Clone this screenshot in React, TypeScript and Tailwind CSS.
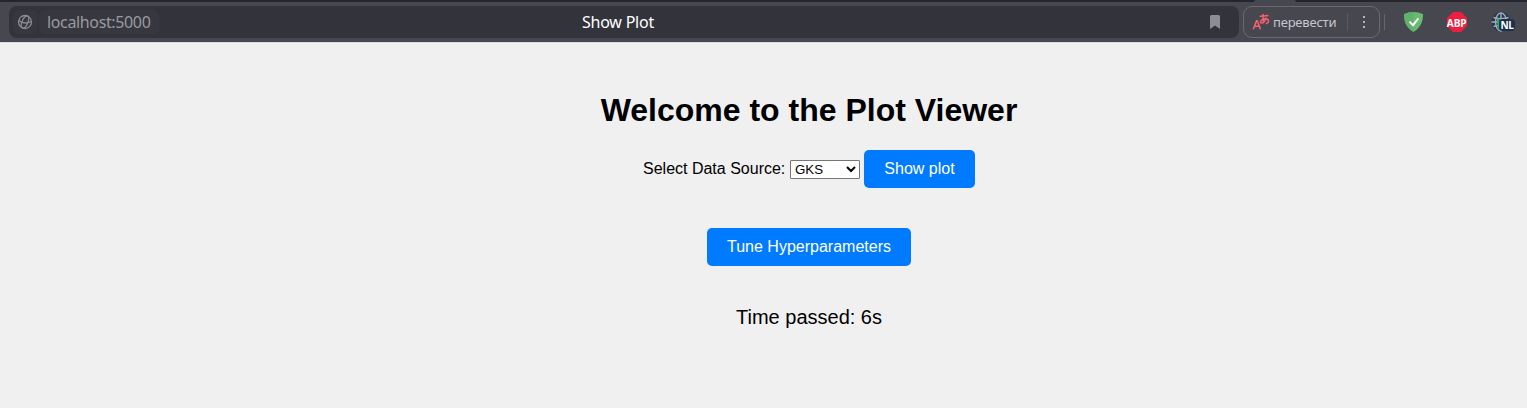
import React from "react";

function SiteIcon() {
  return (
    <svg className="h-4 w-4" viewBox="0 0 16 16" fill="none" stroke="#8a8a93" strokeWidth="1.3">
      <circle cx="8" cy="8" r="6.500" />
      <g transform="rotate(22 8 8)">
        <ellipse cx="8" cy="8" rx="2.900" ry="6.500" />
      </g>
      <path d="M1.800 6.200C5 9.500 10 9.500 14.300 7.500" />
    </svg>
  );
}

function AddressBar() {
  return (
    <div className="grid h-8 w-[1230px] shrink-0 grid-cols-[1fr_auto_1fr] items-center rounded-lg bg-[#33333c]">
      <div className="flex items-center pl-1">
        <div className="flex h-6 w-6 items-center justify-center rounded-md bg-[#36373f]">
          <SiteIcon />
        </div>
        <div className="ml-0.5 flex h-6 w-[120px] items-center whitespace-nowrap rounded-md bg-[#36373f] pl-2 text-base tracking-[-0.36px] text-[#9a9aa1]">
          localhost:5000
        </div>
      </div>
      <div className="relative -left-[6px] whitespace-nowrap text-base tracking-[-0.24px] text-white">Show Plot</div>
      <div className="flex justify-end pr-[19px]">
        <svg className="h-3.5 w-2.5" viewBox="0 0 10 14" fill="#8d8d93">
          <path d="M0 1.5Q0 0 1.5 0h7Q10 0 10 1.5V14L5 10.5 0 14Z" />
        </svg>
      </div>
    </div>
  );
}

function TranslateButton() {
  return (
    <div className="ml-1 flex h-8 w-[137px] shrink-0 items-center rounded-[9px] border border-[#6a6a72] pl-2">
      <svg className="h-[18px] w-[18px] shrink-0" viewBox="0 0 18 18" fill="none" stroke="#fa6270" strokeWidth="1.5">
        <path d="M1.300 16.200 4.600 7.700h.6l3.300 8.500M2.500 13.300h4.800" />
        <path strokeWidth="1.400" d="M7.600 3.300C10.500 3.400 13.500 3.100 16.400 2.500M11.200.8C10.700 4.200 11 7.300 12 9.800M14.300 4.600C13.500 8 11.200 10.500 9.200 10.100 7.100 9.200 9.700 5.600 13.500 5.700c3.800 0 4.200 4.200.4 5" />
      </svg>
      <span className="ml-[3px] whitespace-nowrap text-[13px] leading-4 tracking-[-0.2px] text-[#c6c6cb]">перевести</span>
      <span className="ml-auto h-[18px] w-px bg-[#5a5a62]" />
      <span className="flex w-[31px] flex-col items-center gap-[3px]">
        <i className="h-0.5 w-0.5 bg-[#b3b3b9]" />
        <i className="h-0.5 w-0.5 bg-[#b3b3b9]" />
        <i className="h-0.5 w-0.5 bg-[#b3b3b9]" />
      </span>
    </div>
  );
}

function Extensions() {
  return (
    <div className="flex items-center">
      <span className="ml-1 h-4 w-px bg-[#66666e]" />
      <svg className="ml-[19px] h-5 w-[19px]" viewBox="0 0 19 20">
        <path fill="#68bc71" d="M9.500 0C6.500 0 3 .7 0 2.200c0 3.400 0 11.800 9.500 17.800C19 14 19 5.600 19 2.200 16 .7 12.500 0 9.500 0Z" />
        <path fill="#5fb16c" d="M9.500 0v20C0 14 0 5.600 0 2.200 3 .7 6.500 0 9.500 0Z" />
        <path d="m5.500 9.600 3.500 3.600 5.400-6.900" fill="none" stroke="white" strokeWidth="1.900" />
      </svg>
      <span className="relative ml-6 flex h-5 w-5 items-center justify-center">
        <svg className="absolute inset-0 h-5 w-5" viewBox="0 0 20 20" fill="#ee1e3f">
          <path d="M6 0h8l6 6v8l-6 6H6l-6-6V6Z" />
        </svg>
        <span className="relative scale-x-[0.92] font-['Open_Sans','Noto_Sans',sans-serif] text-[11px] font-bold leading-none tracking-[-0.2px] text-white">ABP</span>
      </span>
      <span className="relative ml-6 h-5 w-6">
        <svg className="h-5 w-5" viewBox="0 0 20 20" fill="none">
          <circle cx="10" cy="10" r="9.700" fill="#25384f" />
          <g stroke="#9dabba" strokeWidth="1.400">
            <ellipse cx="10" cy="10" rx="5.500" ry="9" />
            <path d="M10 1v18M.5 10h19M2.500 5.500C6.500 7 13.500 7 17.500 5.500M2.500 14.500C6.500 13 13.500 13 17.500 14.500" />
          </g>
          <path d="M5.800 7 8.200 6v12.500L7 17.500Z" fill="#43a951" />
        </svg>
        <span className="absolute left-2 top-[7px] flex h-3 w-4 items-center justify-center rounded-sm bg-[#1c304f] font-['Open_Sans','Noto_Sans',sans-serif] text-[10px] font-bold leading-none tracking-[-0.3px] text-white">
          NL
        </span>
      </span>
    </div>
  );
}

function BrowserBar() {
  return (
    <header className="font-['Noto_Sans','Open_Sans',sans-serif]">
      <div className="flex h-0.5 bg-[#25252e] pl-[1254px]">
        <div className="w-[42px] rounded-t-sm bg-[#474750]" />
      </div>
      <div className="flex h-10 items-center bg-[#474750] pl-[9px]">
        <AddressBar />
        <TranslateButton />
        <Extensions />
      </div>
      <div className="h-px bg-[#dcdcdd]" />
    </header>
  );
}

const buttonClass = "h-[38px] rounded-[5px] bg-[#007bff] text-base leading-[18px] text-white";

export default function App() {
  return (
    <div className="h-[408px] w-[1527px] overflow-hidden bg-[#f0f0f0]">
      <BrowserBar />
      <main className="flex flex-col items-center pl-[91px] font-['Liberation_Sans',Arial,sans-serif] text-black">
        <h1 className="mt-[49px] text-[32px] font-bold leading-9">Welcome to the Plot Viewer</h1>
        <form className="mt-[22px] flex h-[38px] items-center" onSubmit={(e) => e.preventDefault()}>
          <label htmlFor="source" className="w-[142px] whitespace-nowrap text-base leading-[18px]">Select Data Source:</label>
          <select id="source" className="ml-[5px] mt-px h-[19px] w-[70px] rounded-[1px] border border-[#767676] bg-white text-[13.333px] leading-[15px]">
            <option>GKS</option>
          </select>
          <button className={`ml-1 w-[111px] ${buttonClass}`}>Show plot</button>
        </form>
        <button className={`mt-10 w-[204px] ${buttonClass}`}>Tune Hyperparameters</button>
        <p className="mt-10 text-xl leading-[23px]">Time passed: 6s</p>
      </main>
    </div>
  );
}
